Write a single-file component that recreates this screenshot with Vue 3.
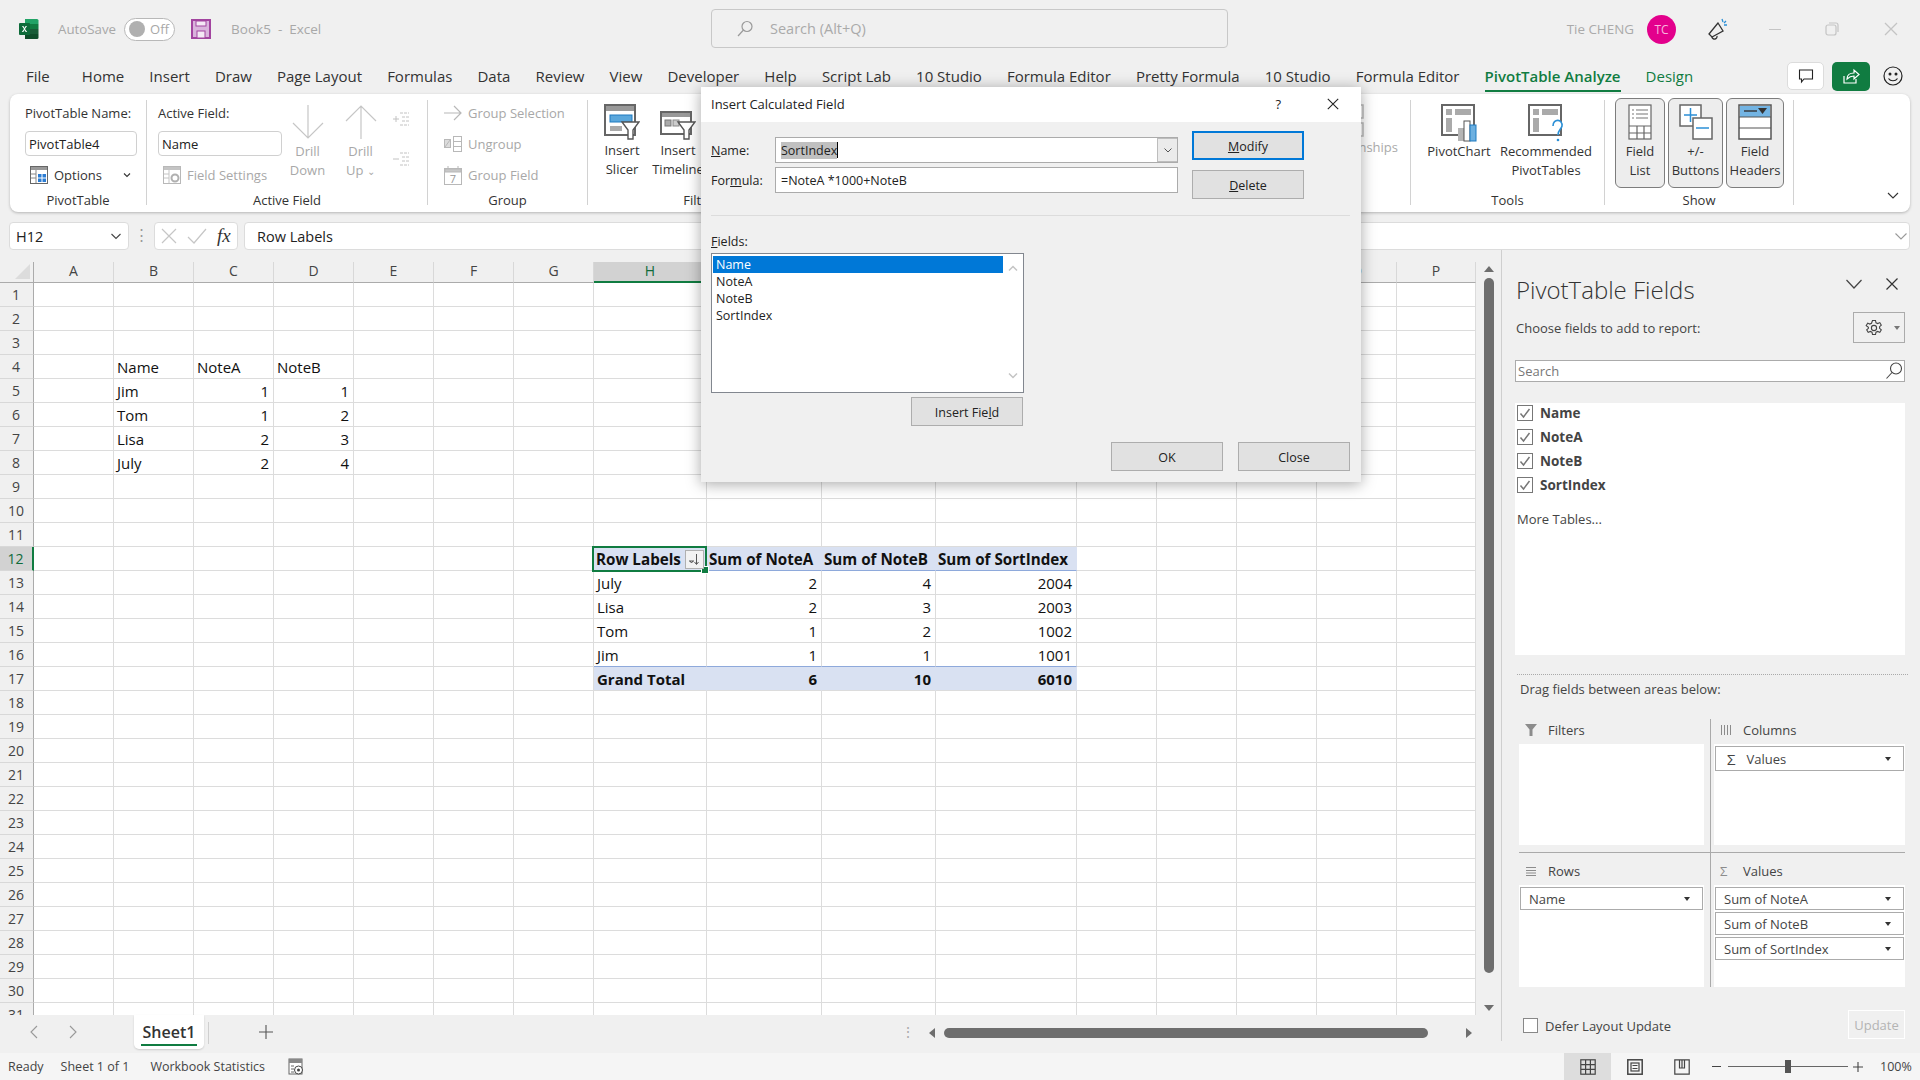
<template>
  <div class="app">
    <!-- title bar -->
    <div class="titlebar">
      <svg class="xl-logo" width="20" height="20" viewBox="0 0 20 20">
        <path d="M6 0h12a1.5 1.5 0 0 1 1.5 1.5V5H6z" fill="#21a366" />
        <rect x="6" y="5" width="13.5" height="5" fill="#107c41" />
        <rect x="6" y="10" width="13.5" height="5" fill="#185c37" />
        <path d="M6 15h13.5v3.5A1.5 1.5 0 0 1 18 20H6z" fill="#0f4c2a" />
        <rect x="0" y="4" width="11" height="12" rx="1" fill="#0e6b3a" />
        <path d="M3 7l2 3-2.2 3h1.5l1.2-2 1.2 2h1.5L6 10l2-3H6.600L5.500 9 4.400 7z" fill="#fff" />
      </svg>
      <span class="autosave">AutoSave</span>
      <div class="toggle"><span class="knob"></span><span>Off</span></div>
      <svg class="save" width="20" height="20" viewBox="0 0 20 20">
        <rect x="1" y="1" width="18" height="18" fill="#d9b3dc" stroke="#a2449f" stroke-width="2" />
        <rect x="5" y="2" width="10" height="5" fill="#f4e8f5" stroke="#a2449f" />
        <rect x="6" y="12" width="8" height="7" fill="#f4e8f5" stroke="#a2449f" />
      </svg>
      <span class="doc-name">Book5&nbsp; -&nbsp; Excel</span>
      <div class="search-box">
        <svg width="18" height="18" viewBox="0 0 18 18" fill="none" stroke="#9a9a9a" stroke-width="1.2">
          <circle cx="11" cy="6.500" r="5" />
          <path d="M7.500 10L2 16" />
        </svg>
        <span>Search (Alt+Q)</span>
      </div>
      <div class="title-right">
        <span class="user">Tie CHENG</span>
        <span class="avatar">TC</span>
        <svg class="mega" width="22" height="24" viewBox="0 0 22 24" fill="none" stroke="#333" stroke-width="1.300">
          <path d="M11 6L2 17l3 3 11-6z" />
          <path d="M5 20a2.500 2.500 0 0 0 5-1" />
          <path d="M15 2l1 3M19 4l-2 2M20 8l-3 0" stroke="#2b8fd6" />
        </svg>
        <span class="win-btn min"></span>
        <svg class="win-btn-svg" width="14" height="14" viewBox="0 0 14 14" fill="none" stroke="#c4c4c4" stroke-width="1.200">
          <rect x="1" y="3" width="10" height="10" rx="2" />
          <path d="M4 1h7a2 2 0 0 1 2 2v7" />
        </svg>
        <svg class="win-close" width="14" height="14" viewBox="0 0 14 14" stroke="#c4c4c4" stroke-width="1.300">
          <path d="M1 1l12 12M13 1L1 13" />
        </svg>
      </div>
    </div>

    <!-- tabs -->
    <div class="tabs">
      <span v-for="t in tabs" :key="t.key" class="tab" :class="t.cls">{{ t.label }}</span>
      <div class="tab-actions">
        <span class="comment-btn">
          <svg width="16" height="16" viewBox="0 0 16 16" fill="none" stroke="#222" stroke-width="1.100">
            <path d="M1.500 2h13v9H6l-2.500 3v-3H1.500z" />
          </svg>
        </span>
        <span class="share-btn">
          <svg width="18" height="18" viewBox="0 0 18 18" fill="none" stroke="#fff" stroke-width="1.200">
            <path d="M2 9v7h12v-4" />
            <path d="M5 12c0-4 3-6 7-6V3l5 4.500L12 12V9c-3 0-5 1-7 3z" />
          </svg>
        </span>
        <svg class="smile" width="20" height="20" viewBox="0 0 20 20" fill="none" stroke="#222" stroke-width="1.200">
          <circle cx="10" cy="10" r="9" />
          <circle cx="7" cy="8" r=".9" fill="#222" />
          <circle cx="13" cy="8" r=".9" fill="#222" />
          <path d="M5.500 12.500c2 3 7 3 9 0" />
        </svg>
      </div>
    </div>

    <!-- ribbon -->
    <div class="ribbon">
      <div class="group g-pivot">
        <div class="small-col">
          <div class="s-row">PivotTable Name:</div>
          <div class="s-row"><div class="r-input w112">PivotTable4</div></div>
          <div class="s-row opt">
            <svg width="18" height="18" viewBox="0 0 18 18">
              <rect x=".5" y=".5" width="17" height="17" fill="#fff" stroke="#666" />
              <rect x="1" y="1" width="16" height="3" fill="#999" />
              <path d="M6 4v13M1 8h5M1 12h5" stroke="#888" />
              <rect x="8" y="8" width="8" height="8" fill="#2b7cd3" />
              <path d="M12 8v8M8 12h8" stroke="#fff" />
            </svg>
            <span>Options</span>
            <svg class="chev" width="10" height="10" viewBox="0 0 10 10" fill="none" stroke="#333" stroke-width="1.100">
              <path d="M2 3.500L5 6.500 8 3.500" />
            </svg>
          </div>
        </div>
        <div class="g-label">PivotTable</div>
      </div>

      <div class="group g-active">
        <div class="g-body">
          <div class="small-col">
            <div class="s-row">Active Field:</div>
            <div class="s-row"><div class="r-input w124">Name</div></div>
            <div class="s-row opt dim">
              <svg width="18" height="18" viewBox="0 0 18 18">
                <rect x=".5" y=".5" width="17" height="17" fill="#fff" stroke="#b8b8b8" />
                <rect x="1" y="1" width="16" height="3" fill="#c4c4c4" />
                <path d="M6 4v13M1 8h5M1 12h5" stroke="#c4c4c4" />
                <circle cx="12" cy="12" r="3.500" fill="none" stroke="#b0b0b0" stroke-width="2" />
              </svg>
              <span>Field Settings</span>
            </div>
          </div>
          <div class="drill down">
            <svg width="32" height="36" viewBox="0 0 32 36" fill="none" stroke="#c6c6c6" stroke-width="1.200">
              <path d="M16 1v33M1 19l15 15 15-15" />
            </svg>
            <span>Drill</span><span>Down</span>
          </div>
          <div class="drill up">
            <svg width="32" height="36" viewBox="0 0 32 36" fill="none" stroke="#c6c6c6" stroke-width="1.200">
              <path d="M16 35V2M1 17L16 2l15 15" />
            </svg>
            <span>Drill</span><span>Up <small>⌄</small></span>
          </div>
          <div class="expand">
            <svg width="18" height="18" viewBox="0 0 18 18" stroke="#c2c2c2">
              <path d="M1 8h6M4 5v6" />
              <path d="M8 2h9M10 6h7M10 10h7M8 14h9" stroke-dasharray="3 1" />
            </svg>
            <svg width="18" height="18" viewBox="0 0 18 18" stroke="#c2c2c2">
              <path d="M1 8h6" />
              <path d="M8 2h9M10 6h7M10 10h7M8 14h9" stroke-dasharray="3 1" />
            </svg>
          </div>
        </div>
        <div class="g-label">Active Field</div>
      </div>

      <div class="group g-group">
        <div class="small-col">
          <div class="s-row opt dim">
            <svg width="18" height="18" viewBox="0 0 18 18" fill="none" stroke="#b8b8b8" stroke-width="1.200">
              <path d="M0 9h17M10 2l7 7-7 7" />
            </svg>
            <span>Group Selection</span>
          </div>
          <div class="s-row opt dim tight">
            <svg width="18" height="18" viewBox="0 0 18 18" fill="none" stroke="#b8b8b8">
              <rect x=".5" y="4.500" width="6" height="8" fill="#dcdcdc" />
              <rect x="9.500" y="1.500" width="8" height="15" />
              <path d="M9.500 6.500h8M9.500 11.500h8M1 12l5-7" />
            </svg>
            <span>Ungroup</span>
          </div>
          <div class="s-row opt dim">
            <svg width="18" height="19" viewBox="0 0 18 19" fill="none" stroke="#b8b8b8">
              <rect x=".5" y="2.500" width="17" height="16" />
              <rect x="1" y="3" width="16" height="3" fill="#c8c8c8" />
              <path d="M4 0v3M14 0v3" />
              <text x="9" y="16.500" text-anchor="middle" font-size="11" fill="#999" stroke="none" font-family="'Open Sans', sans-serif">7</text>
            </svg>
            <span>Group Field</span>
          </div>
        </div>
        <div class="g-label">Group</div>
      </div>

      <div class="group g-filter">
        <div class="g-body">
          <div class="big">
            <svg width="36" height="36" viewBox="0 0 36 36">
              <rect x="1" y="1" width="30" height="30" fill="#fff" stroke="#666" stroke-width="2" />
              <rect x="2" y="2" width="28" height="5" fill="#999" />
              <rect x="6" y="11" width="22" height="7" fill="#5aa7dc" stroke="#1f7ac0" />
              <rect x="6" y="22" width="12" height="5" fill="#aaa" />
              <path d="M18 18h17l-6 8v9h-5v-9z" fill="#fff" stroke="#555" stroke-width="1.400" />
            </svg>
            <span>Insert</span><span>Slicer</span>
          </div>
          <div class="big">
            <svg width="36" height="36" viewBox="0 0 36 36">
              <rect x="1" y="8" width="30" height="22" fill="#fff" stroke="#666" stroke-width="2" />
              <rect x="2" y="9" width="28" height="4" fill="#999" />
              <rect x="5" y="16" width="6" height="6" fill="#aaa" stroke="#777" />
              <rect x="13" y="16" width="6" height="6" fill="#ccc" stroke="#888" />
              <path d="M18 18h17l-6 8v9h-5v-9z" fill="#fff" stroke="#555" stroke-width="1.400" />
            </svg>
            <span>Insert</span><span>Timeline</span>
          </div>
        </div>
        <div class="g-label">Filter</div>
      </div>

      <div class="group g-hidden">
        <div class="rel">
          <svg width="14" height="34" viewBox="0 0 14 34" fill="#fff" stroke="#bdbdbd" stroke-width="1.500">
            <rect x="1" y="1" width="12" height="13" />
            <path d="M4 6h6M4 9h6" />
            <rect x="1" y="19" width="12" height="13" />
            <path d="M4 24h6M4 27h6" />
          </svg>
          <span>Relationships</span>
        </div>
      </div>

      <div class="group g-tools">
        <div class="g-body">
          <div class="big">
            <svg width="36" height="38" viewBox="0 0 36 38">
              <path d="M1 1h32v30H1z" fill="#fff" stroke="#666" stroke-width="2" />
              <rect x="5" y="5" width="6" height="6" fill="#aaa" />
              <rect x="14" y="5" width="16" height="6" fill="#aaa" />
              <rect x="5" y="14" width="6" height="14" fill="#aaa" />
              <rect x="17" y="24" width="6" height="13" fill="#b5b5b5" />
              <rect x="23" y="17" width="6" height="20" fill="#fff" stroke="#555" />
              <rect x="29" y="21" width="6" height="16" fill="#6db0e0" stroke="#1f7ac0" />
            </svg>
            <span>PivotChart</span>
          </div>
          <div class="big rec">
            <svg width="36" height="38" viewBox="0 0 36 38">
              <path d="M1 1h32v30H1z" fill="#fff" stroke="#666" stroke-width="2" />
              <rect x="5" y="5" width="6" height="6" fill="#aaa" />
              <rect x="14" y="5" width="16" height="6" fill="#aaa" />
              <rect x="5" y="14" width="6" height="14" fill="#aaa" />
              <path d="M25 22c0-8 10-7 9 0-.6 3-4 4-4 9" fill="#fff" stroke="#2b8fd6" stroke-width="1.600" />
              <circle cx="30" cy="36" r="1.300" fill="#2b8fd6" />
            </svg>
            <span>Recommended</span><span>PivotTables</span>
          </div>
        </div>
        <div class="g-label">Tools</div>
      </div>

      <div class="group g-show">
        <div class="g-body">
          <div class="toggle-big w50">
            <svg width="24" height="36" viewBox="0 0 24 36" fill="#fff" stroke="#666" stroke-width="1.200">
              <rect x="1" y="1" width="22" height="34" />
              <path d="M1 22h22M1 29h22M9 22v13M16 22v13" />
              <path d="M4 6h2M8 6h12M4 10h2M8 10h12M4 14h2M8 14h12" stroke="#777" />
            </svg>
            <span>Field</span><span>List</span>
          </div>
          <div class="toggle-big w54">
            <svg width="34" height="36" viewBox="0 0 34 36">
              <rect x="1" y="1" width="21" height="21" fill="#fff" stroke="#666" stroke-width="1.500" />
              <path d="M5 11h13M11.500 4v14" stroke="#2b8fd6" stroke-width="1.500" />
              <rect x="14" y="14" width="19" height="21" fill="#fff" stroke="#666" stroke-width="1.500" />
              <path d="M17 24h13" stroke="#2b8fd6" stroke-width="1.500" />
            </svg>
            <span>+/-</span><span>Buttons</span>
          </div>
          <div class="toggle-big w58">
            <svg width="34" height="36" viewBox="0 0 34 36">
              <rect x="1" y="1" width="32" height="34" fill="#fff" stroke="#555" stroke-width="1.500" />
              <rect x="2" y="2" width="30" height="11" fill="#73b4e3" />
              <path d="M1 13h32M1 24h32" stroke="#555" stroke-width="1.200" />
              <path d="M6 7h13" stroke="#333" stroke-width="1.400" />
              <path d="M20 4h9l-4.500 6z" fill="#333" />
            </svg>
            <span>Field</span><span>Headers</span>
          </div>
        </div>
        <div class="g-label">Show</div>
      </div>

      <svg class="collapse" width="14" height="14" viewBox="0 0 14 14" fill="none" stroke="#333" stroke-width="1.100">
        <path d="M2 4l5 5 5-5" />
      </svg>
    </div>

    <!-- formula bar -->
    <div class="formula-bar">
      <div class="name-box">
        <span>H12</span>
        <svg width="12" height="12" viewBox="0 0 12 12" fill="none" stroke="#444" stroke-width="1.100">
          <path d="M1.500 4l4.500 4.500L10.500 4" />
        </svg>
      </div>
      <div class="fb-dots">⋮</div>
      <div class="fx-box">
        <svg width="16" height="16" viewBox="0 0 16 16" stroke="#c6c6c6" stroke-width="1.200">
          <path d="M1 1l14 14M15 1L1 15" />
        </svg>
        <svg width="20" height="16" viewBox="0 0 20 16" fill="none" stroke="#c6c6c6" stroke-width="1.200">
          <path d="M1 9l6 6L19 1" />
        </svg>
        <span class="fx">fx</span>
      </div>
      <div class="formula-input">
        <span>Row Labels</span>
        <svg width="14" height="14" viewBox="0 0 14 14" fill="none" stroke="#999" stroke-width="1.100">
          <path d="M1.500 4.500L7 10l5.500-5.500" />
        </svg>
      </div>
    </div>

    <!-- work area -->
    <div class="work">
      <div class="sheet-col">
        <div class="sheet-top">
          <div class="grid">
            <div class="corner"><span class="tri"></span></div>
            <div v-for="c in columns" :key="c.n" class="col-head" :class="{ sel: c.n === 'H' }">{{ c.n }}</div>
            <template v-for="r in rows" :key="r">
              <div class="row-head" :class="{ sel: r === 12 }">{{ r }}</div>
              <div v-for="c in columns" :key="c.n + r" class="cell" :class="cellClass(c.n, r)">
                {{ cellText(c.n, r) }}
              </div>
            </template>
            <div class="sel-box">
              <span class="sel-handle"></span>
              <span class="pv-btn">
                <svg width="15" height="15" viewBox="0 0 15 15" fill="none" stroke="#555">
                  <path d="M9.500 2v10M7.500 10l2 2.500 2-2.500" />
                  <path d="M2 9h5M3 9l1.500 2L6 9" />
                </svg>
              </span>
            </div>
          </div>
          <div class="vscroll">
            <span class="arr-up"></span>
            <span class="v-thumb"></span>
            <span class="arr-down"></span>
          </div>
        </div>
        <div class="sheet-tabs">
          <svg class="nav first" width="12" height="16" viewBox="0 0 12 16" fill="none" stroke="#999" stroke-width="1.100">
            <path d="M9 2L3 8l6 6" />
          </svg>
          <svg class="nav second" width="12" height="16" viewBox="0 0 12 16" fill="none" stroke="#999" stroke-width="1.100">
            <path d="M3 2l6 6-6 6" />
          </svg>
          <div class="sheet-tab"><span>Sheet1</span></div>
          <span class="tab-sep"></span>
          <span class="add-sheet">
            <svg width="16" height="16" viewBox="0 0 16 16" stroke="#555" stroke-width="1.100">
              <path d="M8 1v14M1 8h14" />
            </svg>
          </span>
          <span class="hs-dots">⋮</span>
          <div class="hscroll">
            <span class="arr-left"></span>
            <span class="h-thumb"></span>
            <span class="arr-right"></span>
          </div>
        </div>
      </div>

      <!-- pivot fields pane -->
      <div class="pane">
        <div class="pane-head">
          <span class="pane-title">PivotTable Fields</span>
          <div class="pane-ctrl">
            <svg width="18" height="12" viewBox="0 0 18 12" fill="none" stroke="#444" stroke-width="1.200">
              <path d="M1.500 2L9 10l7.500-8" />
            </svg>
            <svg width="14" height="14" viewBox="0 0 14 14" stroke="#333" stroke-width="1.200">
              <path d="M1.500 1.500l11 11M12.500 1.500l-11 11" />
            </svg>
          </div>
        </div>
        <div class="choose-row">
          <span>Choose fields to add to report:</span>
          <div class="gear-box">
            <svg width="18" height="18" viewBox="0 0 18 18" fill="none" stroke="#444" stroke-width="1.100">
              <path d="M7.500 1.500h3l.5 2.300 1.700.8 2.100-1 1.500 2.600-1.700 1.500v1.600l1.700 1.500-1.500 2.600-2.100-1-1.700.8-.5 2.300h-3l-.5-2.300-1.700-.8-2.100 1-1.500-2.600 1.700-1.500V8.200L1.200 6.700l1.500-2.600 2.100 1 1.700-.8z" />
              <circle cx="9" cy="9" r="2.600" />
            </svg>
            <span class="caret-sm"></span>
          </div>
        </div>
        <div class="pane-search">
          <span>Search</span>
          <svg width="18" height="18" viewBox="0 0 18 18" fill="none" stroke="#444" stroke-width="1.100">
            <circle cx="11" cy="6.500" r="5.500" />
            <path d="M7 10.500L1.500 16.500" />
          </svg>
        </div>
        <div class="field-list">
          <div v-for="f in fields" :key="f" class="field-row">
            <span class="check">
              <svg width="12" height="12" viewBox="0 0 12 12" fill="none" stroke="#777" stroke-width="1.500">
                <path d="M1.500 6.500l3 3.500 6-8" />
              </svg>
            </span>
            <b>{{ f }}</b>
          </div>
          <div class="more">More Tables...</div>
        </div>
        <div class="dotted"></div>
        <div class="drag-label">Drag fields between areas below:</div>
        <div class="areas">
          <div class="area left top-row">
            <div class="area-head">
              <svg width="12" height="12" viewBox="0 0 12 12" fill="#8c8c8c">
                <path d="M0 0h12L7.500 5.500V12h-3V5.500z" />
              </svg>
              <span>Filters</span>
            </div>
            <div class="area-box"></div>
          </div>
          <div class="area top-row">
            <div class="area-head">
              <svg width="12" height="12" viewBox="0 0 12 12" stroke="#8c8c8c">
                <path d="M1.500 1v10M4.500 1v10M7.500 1v10M10.500 1v10" />
              </svg>
              <span>Columns</span>
            </div>
            <div class="area-box">
              <div class="pill sigma"><i>Σ</i><span>Values</span><span class="caret-pill"></span></div>
            </div>
          </div>
          <div class="area left">
            <div class="area-head">
              <svg width="12" height="12" viewBox="0 0 12 12" stroke="#8c8c8c">
                <path d="M1 2.500h10M1 5.500h10M1 8h10M1 10.500h10" />
              </svg>
              <span>Rows</span>
            </div>
            <div class="area-box">
              <div class="pill"><span>Name</span><span class="caret-pill"></span></div>
            </div>
          </div>
          <div class="area">
            <div class="area-head">
              <span class="sig-ico">Σ</span>
              <span>Values</span>
            </div>
            <div class="area-box">
              <div v-for="v in valueFields" :key="v" class="pill"><span>{{ v }}</span><span class="caret-pill"></span></div>
            </div>
          </div>
        </div>
        <div class="pane-foot">
          <label class="defer"><span class="box"></span><span>Defer Layout Update</span></label>
          <span class="update">Update</span>
        </div>
      </div>
    </div>

    <!-- status bar -->
    <div class="statusbar">
      <span class="st first">Ready</span>
      <span class="st">Sheet 1 of 1</span>
      <span class="st wb">Workbook Statistics</span>
      <svg class="st-ico" width="16" height="18" viewBox="0 0 16 18">
        <rect x="1" y="1" width="13" height="15" fill="#fff" stroke="#666" />
        <rect x="1" y="1" width="13" height="4" fill="#888" />
        <path d="M3 8h3M3 11h3M3 14h3" stroke="#666" />
        <circle cx="10.500" cy="12" r="4" fill="#fff" stroke="#444" />
        <circle cx="10.500" cy="12" r="1.500" fill="#444" />
      </svg>
      <div class="st-right">
        <span class="view active">
          <svg width="16" height="16" viewBox="0 0 16 16" fill="none" stroke="#444" stroke-width="1.200">
            <rect x=".8" y=".8" width="14.400" height="14.400" />
            <path d="M5.600 1v14M10.400 1v14M1 5.600h14M1 10.400h14" />
          </svg>
        </span>
        <span class="view">
          <svg width="16" height="16" viewBox="0 0 16 16" fill="none" stroke="#444" stroke-width="1.200">
            <rect x=".8" y=".8" width="14.400" height="14.400" stroke-width="1.500" />
            <rect x="4" y="4" width="8" height="8" />
            <path d="M5.500 6.500h5M5.500 9.500h5" />
          </svg>
        </span>
        <span class="view">
          <svg width="16" height="16" viewBox="0 0 16 16" fill="none" stroke="#444" stroke-width="1.200">
            <path d="M.8.800h14.400v14.400H.8zM5.500 1v8h5V1M8 1v8" />
          </svg>
        </span>
        <span class="zoom-minus"></span>
        <div class="slider"><span class="slider-thumb"></span></div>
        <svg class="zoom-plus" width="10" height="10" viewBox="0 0 10 10" stroke="#444" stroke-width="1.100">
          <path d="M5 0v10M0 5h10" />
        </svg>
        <span class="zoom-val">100%</span>
      </div>
    </div>

    <!-- dialog -->
    <div class="dialog">
      <div class="dlg-title">
        <span>Insert Calculated Field</span>
        <span class="dlg-help">?</span>
        <svg width="12" height="12" viewBox="0 0 12 12" stroke="#222" stroke-width="1.100">
          <path d="M.8.800l10.400 10.400M11.200.800L.8 11.200" />
        </svg>
      </div>
      <div class="dlg-body">
        <div class="dlg-top">
          <div class="dlg-fields">
            <div class="dlg-row">
              <span class="dlg-lab"><u>N</u>ame:</span>
              <div class="dlg-combo">
                <span class="dlg-text"><span class="dlg-sel">SortIndex</span><span class="dlg-caret"></span></span>
                <span class="combo-arrow">
                  <svg width="10" height="10" viewBox="0 0 10 10" fill="none" stroke="#555">
                    <path d="M1.500 3.500L5 7l3.500-3.500" />
                  </svg>
                </span>
              </div>
            </div>
            <div class="dlg-row">
              <span class="dlg-lab">For<u>m</u>ula:</span>
              <div class="dlg-input">=NoteA *1000+NoteB</div>
            </div>
          </div>
          <div class="dlg-btns">
            <span class="btn primary"><u>M</u>odify</span>
            <span class="btn"><u>D</u>elete</span>
          </div>
        </div>
        <div class="dlg-hr"></div>
        <div class="fields-lab"><u>F</u>ields:</div>
        <div class="listbox">
          <div class="list-items">
            <div v-for="(f, i) in fields" :key="f" class="list-item" :class="{ on: i === 0 }">{{ f }}</div>
          </div>
          <div class="list-scroll">
            <svg width="10" height="8" viewBox="0 0 10 8" fill="none" stroke="#c4c4c4" stroke-width="1.500">
              <path d="M1 6.500l4-4 4 4" />
            </svg>
            <svg width="10" height="8" viewBox="0 0 10 8" fill="none" stroke="#c4c4c4" stroke-width="1.500">
              <path d="M1 1.500l4 4 4-4" />
            </svg>
          </div>
        </div>
        <div class="insert-row"><span class="btn">Insert Fie<u>l</u>d</span></div>
        <div class="dlg-foot">
          <span class="btn">OK</span>
          <span class="btn">Close</span>
        </div>
      </div>
    </div>
  </div>
</template>

<script setup>
const tabs = [
  'File', 'Home', 'Insert', 'Draw', 'Page Layout', 'Formulas', 'Data', 'Review', 'View',
  'Developer', 'Help', 'Script Lab', '10 Studio', 'Formula Editor', 'Pretty Formula',
  '10 Studio', 'Formula Editor',
].map((label, i) => ({ label, key: i, cls: '' }))
tabs.push({ label: 'PivotTable Analyze', key: 'pa', cls: 'active' })
tabs.push({ label: 'Design', key: 'de', cls: 'ctx' })

const widths = [80, 80, 80, 80, 80, 80, 80, 113, 115, 114, 141, 80, 80, 80, 80, 79]
const columns = widths.map((w, i) => ({ n: String.fromCharCode(65 + i), w }))
const rows = Array.from({ length: 31 }, (_, i) => i + 1)

const fields = ['Name', 'NoteA', 'NoteB', 'SortIndex']
const valueFields = ['Sum of NoteA', 'Sum of NoteB', 'Sum of SortIndex']

const data = {
  B4: 'Name', C4: 'NoteA', D4: 'NoteB',
  B5: 'Jim', C5: 1, D5: 1,
  B6: 'Tom', C6: 1, D6: 2,
  B7: 'Lisa', C7: 2, D7: 3,
  B8: 'July', C8: 2, D8: 4,
  H12: 'Row Labels', I12: 'Sum of NoteA', J12: 'Sum of NoteB', K12: 'Sum of SortIndex',
  H13: 'July', I13: 2, J13: 4, K13: 2004,
  H14: 'Lisa', I14: 2, J14: 3, K14: 2003,
  H15: 'Tom', I15: 1, J15: 2, K15: 1002,
  H16: 'Jim', I16: 1, J16: 1, K16: 1001,
  H17: 'Grand Total', I17: 6, J17: 10, K17: 6010,
}

const cellText = (c, r) => data[c + r] ?? ''

const cellClass = (c, r) => {
  const inPivot = 'HIJK'.includes(c)
  return {
    num: typeof data[c + r] === 'number',
    'pv-head': inPivot && r === 12,
    'pv-total': inPivot && r === 17,
    'pv-last': inPivot && r === 16,
  }
}
</script>

<style>
html, body { margin: 0; padding: 0; background: #f0f0f0; }
</style>

<style scoped>
.app {
  width: 1920px;
  height: 1080px;
  display: flex;
  flex-direction: column;
  position: relative;
  overflow: hidden;
  background: #f0f0f0;
  font-family: "Open Sans", "Noto Sans", sans-serif;
  font-size: 13px;
  color: #333;
}

/* title bar */
.titlebar {
  height: 58px;
  display: flex;
  align-items: center;
  padding-left: 19px;
  flex-shrink: 0;
  color: #a8a8a8;
}
.autosave { margin-left: 19px; font-size: 13.300px; }
.toggle {
  width: 51px;
  height: 23px;
  margin-left: 8px;
  box-sizing: border-box;
  border: 1px solid #b8b8b8;
  border-radius: 12px;
  background: #fff;
  display: flex;
  align-items: center;
  padding-left: 4px;
  gap: 5px;
  font-size: 13px;
}
.knob { width: 16px; height: 16px; border-radius: 50%; background: #b0b0b0; }
.save { margin-left: 16px; }
.doc-name { margin-left: 20px; font-size: 13.500px; }
.search-box {
  position: absolute;
  left: 711px;
  top: 9px;
  width: 517px;
  height: 39px;
  box-sizing: border-box;
  border: 1px solid #c8c8c8;
  border-radius: 4px;
  display: flex;
  align-items: center;
  padding-left: 24px;
  gap: 16px;
  font-size: 14.500px;
  color: #aaa;
}
.title-right {
  margin-left: auto;
  display: flex;
  align-items: center;
  padding-right: 22px;
}
.user { font-size: 13.400px; color: #aaa; }
.avatar {
  width: 29px;
  height: 29px;
  margin-left: 13px;
  border-radius: 50%;
  background: #e3008c;
  color: #f6b6dc;
  font-size: 12px;
  display: flex;
  align-items: center;
  justify-content: center;
}
.mega { margin-left: 31px; }
.win-btn.min { width: 12px; height: 1px; margin-left: 40px; background: #c4c4c4; }
.win-btn-svg { margin-left: 44px; }
.win-close { margin-left: 45px; }

/* tabs */
.tabs {
  height: 36px;
  flex-shrink: 0;
  display: flex;
  align-items: center;
  gap: 25.100px;
  padding-left: 26px;
  font-size: 15px;
  color: #333;
  position: relative;
}
.tab { line-height: 30px; white-space: nowrap; }
.tab:first-child { margin-right: 7px; }
.tab.active {
  color: #107c41;
  font-weight: 600;
  box-shadow: 0 2px 0 0 #107c41;
  height: 28px;
  line-height: 28px;
}
.tab.ctx { color: #107c41; }
.tab-actions {
  margin-left: auto;
  display: flex;
  align-items: center;
  padding-right: 17px;
  gap: 8px;
}
.comment-btn {
  width: 37px;
  height: 28px;
  border: 1px solid #dcdcdc;
  border-radius: 5px;
  background: #fff;
  box-sizing: border-box;
  display: flex;
  align-items: center;
  justify-content: center;
}
.share-btn {
  width: 38px;
  height: 29px;
  border-radius: 5px;
  background: #107c41;
  display: flex;
  align-items: center;
  justify-content: center;
}
.smile { margin-left: 5px; }

/* ribbon */
.ribbon {
  height: 118px;
  margin: 0 10px;
  flex-shrink: 0;
  background: #fff;
  border-radius: 8px;
  box-shadow: 0 1px 3px rgba(0, 0, 0, .25);
  display: flex;
  padding-top: 6px;
  box-sizing: border-box;
  position: relative;
}
.group {
  height: 105px;
  border-right: 1px solid #d2d2d2;
  box-sizing: border-box;
  display: flex;
  flex-direction: column;
  flex-shrink: 0;
}
.g-label {
  margin-top: auto;
  margin-bottom: -5px;
  line-height: 20px;
  text-align: center;
  font-size: 13px;
  color: #333;
}
.g-body { display: flex; }
.g-pivot { width: 137px; padding-left: 15px; }
.g-pivot .g-label { margin-left: -15px; }
.g-active { width: 281px; padding-left: 11px; }
.g-active .g-label { margin-left: -11px; }
.g-group { width: 160px; padding-left: 16px; }
.g-group .g-label { margin-left: -16px; }
.g-filter { width: 222px; padding-left: 6px; }
.g-filter .g-label { margin-left: -6px; }
.g-hidden { width: 601px; align-items: flex-end; padding-right: 12px; }
.g-tools { width: 194px; }
.g-show { width: 189px; padding-left: 10px; }
.g-show .g-label { margin-left: -10px; }
.small-col {
  display: grid;
  grid-template-rows: 26px 35px 28px;
  height: 89px;
  white-space: nowrap;
}
.s-row { display: flex; align-items: center; }
.s-row.opt { gap: 6px; padding-left: 5px; }
.g-group .s-row.opt { padding-left: 0; }
.s-row.dim { color: #a8a8a8; }
.chev { margin-left: 14px; }
.r-input {
  height: 25px;
  box-sizing: border-box;
  border: 1px solid #d0d0d0;
  border-radius: 4px;
  display: flex;
  align-items: center;
  padding-left: 3px;
  color: #222;
}
.w112 { width: 112px; }
.w124 { width: 124px; }
.drill {
  width: 53px;
  display: flex;
  flex-direction: column;
  align-items: center;
  color: #a8a8a8;
  padding-top: 4px;
  line-height: 19px;
}
.drill svg { margin-bottom: 2px; }
.drill small { font-size: 10px; }
.drill.down { margin-left: -1px; }
.expand {
  margin-left: 5px;
  padding-top: 11px;
  display: flex;
  flex-direction: column;
  gap: 22px;
}
.big {
  display: flex;
  flex-direction: column;
  align-items: center;
  padding-top: 4px;
  line-height: 19px;
  width: 56px;
  color: #333;
}
.big svg { margin-bottom: 1px; }
.g-tools .big { width: 96px; }
.g-tools .big svg { margin-bottom: 0; }
.g-tools .big.rec { width: 90px; margin-left: -6px; }
.rel {
  display: flex;
  flex-direction: column;
  align-items: center;
  padding-top: 4px;
  color: #aaa;
  line-height: 19px;
}
.toggle-big {
  height: 90px;
  margin-top: -2px;
  margin-right: 3px;
  box-sizing: border-box;
  border: 1px solid #7d7d7d;
  border-radius: 6px;
  background: #ededed;
  display: flex;
  flex-direction: column;
  align-items: center;
  padding-top: 5px;
  line-height: 19px;
}
.toggle-big svg { margin-bottom: 2px; }
.w50 { width: 50px; }
.w54 { width: 55px; }
.w58 { width: 58px; }
.collapse { position: absolute; right: 10px; top: 95px; }

/* formula bar */
.formula-bar {
  height: 28px;
  margin: 10px 10px 0 9px;
  display: flex;
  flex-shrink: 0;
  font-size: 14.500px;
  color: #222;
}
.formula-bar > div { box-sizing: border-box; }
.name-box, .fx-box, .formula-input {
  background: #fff;
  border: 1px solid #dcdcdc;
  border-radius: 4px;
  display: flex;
  align-items: center;
}
.name-box { width: 120px; padding: 0 6px; justify-content: space-between; }
.fb-dots { width: 25px; text-align: center; color: #999; line-height: 26px; }
.fx-box { width: 84px; padding-left: 6px; gap: 10px; }
.fx { font-family: "Liberation Serif", serif; font-style: italic; font-size: 19px; color: #333; }
.formula-input {
  flex: 1;
  margin-left: 6px;
  padding: 0 1px 0 12px;
  justify-content: space-between;
}

/* work area */
.work { flex: 1; display: flex; min-height: 0; }
.sheet-col {
  width: 1501px;
  flex-shrink: 0;
  display: flex;
  flex-direction: column;
  padding-top: 12px;
  box-sizing: border-box;
}
.sheet-top { display: flex; height: 753px; }
.grid {
  width: 1476px;
  height: 753px;
  flex-shrink: 0;
  display: grid;
  grid-template-columns: 34px repeat(7, 80px) 113px 115px 114px 141px repeat(4, 80px) 79px;
  grid-template-rows: 21px repeat(31, 24px);
  overflow: hidden;
  background: #fff;
  position: relative;
  color: #111;
  font-size: 15px;
}
.corner {
  background: #f0f0f0;
  border-right: 1px solid #ababab;
  border-bottom: 1px solid #ababab;
  box-sizing: border-box;
  position: relative;
}
.tri {
  position: absolute;
  right: 3px;
  bottom: 3px;
  border-style: solid;
  border-width: 0 0 15px 15px;
  border-color: transparent transparent #dcdcdc transparent;
}
.col-head {
  background: #f0f0f0;
  border-right: 1px solid #d8d8d8;
  border-bottom: 1px solid #ababab;
  box-sizing: border-box;
  text-align: center;
  line-height: 18px;
  font-size: 14px;
  color: #444;
}
.col-head.sel { background: #d2d2d2; border-bottom: 2px solid #107c41; color: #0f6b3a; }
.row-head {
  background: #f0f0f0;
  border-right: 1px solid #ababab;
  border-bottom: 1px solid #d8d8d8;
  box-sizing: border-box;
  text-align: center;
  padding-right: 1px;
  line-height: 23px;
  font-size: 14px;
  color: #444;
}
.row-head.sel { background: #d2d2d2; border-right: 2px solid #107c41; color: #0f6b3a; }
.cell {
  border-right: 1px solid #dcdcdc;
  border-bottom: 1px solid #dcdcdc;
  box-sizing: border-box;
  padding: 0 4px 0 3px;
  line-height: 24px;
  white-space: nowrap;
  overflow: hidden;
}
.cell.num { text-align: right; }
.cell.pv-head {
  background: #d9e1f2;
  font-weight: 700;
  font-size: 15.200px;
  padding: 0 2px;
  border-right-color: #d9e1f2;
  border-bottom-color: #8ea9db;
}
.cell.pv-total { background: #d9e1f2; font-weight: 700; border-right-color: #d9e1f2; border-bottom-color: #dcdcdc; }
.cell.pv-last { border-bottom-color: #8ea9db; }
.sel-box {
  position: absolute;
  left: 592px;
  top: 284px;
  width: 115px;
  height: 26px;
  box-sizing: border-box;
  border: 2px solid #107c41;
}
.sel-handle {
  position: absolute;
  right: -4px;
  bottom: -4px;
  width: 6px;
  height: 6px;
  background: #107c41;
  border: 1px solid #fff;
}
.pv-btn {
  position: absolute;
  right: 1px;
  top: 2px;
  width: 19px;
  height: 19px;
  box-sizing: border-box;
  background: #f2f2f2;
  border: 1px solid #b0b0b0;
  display: flex;
  align-items: center;
  justify-content: center;
}
.vscroll {
  width: 26px;
  height: 753px;
  display: flex;
  flex-direction: column;
  align-items: center;
  position: relative;
}
.arr-up {
  margin-top: 4px;
  border-style: solid;
  border-width: 0 5.500px 6px 5.500px;
  border-color: transparent transparent #6e6e6e transparent;
}
.v-thumb { width: 10px; height: 695px; margin-top: 6px; background: #6e6e6e; border-radius: 5px; }
.arr-down {
  margin-top: 32px;
  border-style: solid;
  border-width: 6px 5.500px 0 5.500px;
  border-color: #6e6e6e transparent transparent transparent;
}
.sheet-tabs {
  height: 38px;
  display: flex;
  align-items: flex-start;
  position: relative;
  width: 1476px;
}
.nav { margin-top: 9px; }
.nav.first { margin-left: 28px; }
.nav.second { margin-left: 27px; }
.sheet-tab {
  width: 70px;
  height: 34px;
  margin-left: 55px;
  background: #fff;
  border-radius: 0 0 5px 5px;
  box-shadow: 0 1px 2px rgba(0, 0, 0, .15);
  display: flex;
  justify-content: center;
  position: relative;
  font-size: 16px;
  font-weight: 600;
  color: #333;
  line-height: 34px;
}
.sheet-tab span { border-bottom: 2px solid #107c41; height: 29px; padding: 0 2px; margin-top: 0; }
.tab-sep { width: 1px; height: 22px; margin: 7px 0 0 4px; background: #cfcfcf; }
.add-sheet { margin: 9px 0 0 49px; }
.hs-dots { position: absolute; left: 901px; top: 7px; color: #aaa; font-size: 14px; }
.hscroll {
  position: absolute;
  left: 929px;
  right: 0;
  top: 13px;
  height: 10px;
  display: flex;
  align-items: center;
}
.arr-left {
  border-style: solid;
  border-width: 5.500px 6px 5.500px 0;
  border-color: transparent #6e6e6e transparent transparent;
}
.h-thumb { width: 484px; height: 10px; margin-left: 9px; border-radius: 5px; background: #6e6e6e; }
.arr-right {
  margin-left: 38px;
  border-style: solid;
  border-width: 5.500px 0 5.500px 6px;
  border-color: transparent transparent transparent #6e6e6e;
}

/* pane */
.pane {
  flex: 1;
  border-left: 1px solid #cfcfcf;
  padding: 24px 15px 0 13px;
  box-sizing: border-box;
  height: 791px;
}
.pane-head { height: 30px; display: flex; align-items: center; justify-content: space-between; }
.pane-title { font-size: 24px; font-weight: 300; color: #333; padding-left: 1px; }
.pane-ctrl { display: flex; align-items: center; gap: 22px; padding-right: 6px; margin-top: -10px; }
.choose-row {
  margin-top: 8px;
  height: 31px;
  display: flex;
  align-items: center;
  justify-content: space-between;
  color: #444;
  padding-left: 1px;
}
.gear-box {
  width: 52px;
  height: 31px;
  box-sizing: border-box;
  border: 1px solid #ababab;
  display: flex;
  align-items: center;
  padding-left: 11px;
  gap: 11px;
}
.caret-sm {
  border-style: solid;
  border-width: 4px 3.500px 0 3.500px;
  border-color: #777 transparent transparent transparent;
}
.pane-search {
  margin-top: 17px;
  height: 22px;
  box-sizing: border-box;
  border: 1px solid #ababab;
  background: #fff;
  display: flex;
  align-items: center;
  justify-content: space-between;
  padding: 0 1px 0 2px;
  color: #777;
}
.field-list {
  margin-top: 21px;
  height: 252px;
  background: #fff;
  padding: 0 2px;
  box-sizing: border-box;
}
.field-row { height: 24px; display: flex; align-items: center; gap: 7px; color: #444; position: relative; top: -2px; }
.field-row b { font-weight: 700; font-size: 13.500px; }
.check {
  width: 16px;
  height: 16px;
  box-sizing: border-box;
  border: 1px solid #777;
  display: flex;
  align-items: center;
  justify-content: center;
}
.more { margin-top: 11px; line-height: 18px; color: #444; }
.dotted {
  margin: 19px -3px 0 2px;
  border-top: 1px dotted #aaa;
}
.drag-label { margin: 5px 0 0 5px; line-height: 18px; color: #444; }
.areas {
  margin: 21px 0 0 4px;
  display: grid;
  grid-template-columns: 192px 194px;
  grid-template-rows: 134px 134px;
}
.area { display: flex; flex-direction: column; color: #444; }
.area.left { border-right: 1px solid #aaa; }
.area.top-row { border-bottom: 1px solid #aaa; padding-bottom: 7px; box-sizing: border-box; }
.area:not(.left) { padding-left: 3px; }
.area.left .area-box { margin-right: 6px; }
.area-head { height: 25px; display: flex; align-items: center; gap: 11px; padding-left: 6px; padding-bottom: 3px; box-sizing: border-box; }
.area:not(.top-row) .area-head { height: 32px; padding-top: 4px; padding-bottom: 0; }
.sig-ico { color: #8c8c8c; font-size: 13px; width: 12px; }
.area-box { flex: 1; background: #fff; padding: 2px 1px; display: flex; flex-direction: column; gap: 2px; }
.pill {
  height: 23px;
  box-sizing: border-box;
  border: 1px solid #ababab;
  background: #fff;
  display: flex;
  align-items: center;
  padding: 0 12px 0 8px;
  color: #444;
}
.pill.sigma { height: 25px; }
.pill i { font-style: normal; font-size: 15px; margin: 0 11px 0 3px; }
.caret-pill {
  margin-left: auto;
  border-style: solid;
  border-width: 4px 3.500px 0 3.500px;
  border-color: #333 transparent transparent transparent;
}
.pane-foot {
  margin-top: 23px;
  height: 29px;
  display: flex;
  align-items: center;
  justify-content: space-between;
  color: #444;
}
.defer { display: flex; align-items: center; gap: 7px; padding: 2px 0 0 8px; }
.box { width: 15px; height: 15px; box-sizing: border-box; border: 1px solid #888; background: #fff; }
.update {
  width: 57px;
  height: 29px;
  box-sizing: border-box;
  border: 1px solid #fff;
  display: flex;
  align-items: center;
  justify-content: center;
  color: #b4b4b4;
}

/* status bar */
.statusbar {
  height: 27px;
  flex-shrink: 0;
  display: flex;
  align-items: center;
  background: #f5f5f5;
  font-size: 12.500px;
  color: #444;
}
.st { margin-left: 17px; }
.st.first { margin-left: 8px; }
.st.wb { margin-left: 21px; }
.st-ico { margin-left: 23px; }
.st-right { margin-left: auto; display: flex; align-items: center; height: 100%; }
.view {
  width: 47px;
  height: 100%;
  display: flex;
  align-items: center;
  justify-content: center;
}
.view.active { background: #ddd; }
.zoom-minus { width: 9px; height: 1px; margin-left: 6.500px; background: #444; }
.slider { width: 120px; height: 1px; margin-left: 7.500px; background: #666; position: relative; }
.slider-thumb {
  position: absolute;
  left: 57px;
  top: -6px;
  width: 6px;
  height: 13px;
  background: #555;
}
.zoom-plus { margin-left: 5px; }
.zoom-val { margin-left: 17px; width: 40px; font-size: 12.500px; }

/* dialog */
.dialog {
  position: absolute;
  left: 701px;
  top: 87px;
  width: 660px;
  height: 395px;
  background: #f0f0f0;
  box-shadow: 0 2px 14px rgba(0, 0, 0, .35);
  display: flex;
  flex-direction: column;
  color: #222;
  font-size: 12.500px;
}
.dlg-title {
  height: 35px;
  flex-shrink: 0;
  background: #fff;
  display: flex;
  align-items: center;
  padding: 0 22px 2px 10px;
  box-sizing: border-box;
  font-size: 13px;
}
.dlg-help { margin-left: auto; margin-right: 46px; }
.dlg-body { flex: 1; padding: 9px 11px 0 10px; }
.dlg-top { display: flex; }
.dlg-fields { width: 467px; padding-top: 6px; display: flex; flex-direction: column; gap: 4px; }
.dlg-row { display: flex; align-items: center; }
.dlg-lab { width: 64px; flex-shrink: 0; }
.dlg-combo, .dlg-input {
  width: 403px;
  height: 26px;
  box-sizing: border-box;
  border: 1px solid #ababab;
  background: #fff;
  display: flex;
  align-items: center;
  padding-left: 5px;
}
.dlg-combo { padding-right: 0; justify-content: space-between; }
.dlg-text { display: flex; align-items: center; }
.dlg-sel { background: #c0c0c0; }
.dlg-caret { width: 1px; height: 16px; background: #000; }
.combo-arrow {
  width: 20px;
  height: 24px;
  box-sizing: border-box;
  border: 1px solid #bdbdbd;
  border-right: 0;
  background: #ebebeb;
  display: flex;
  align-items: center;
  justify-content: center;
}
.dlg-btns { margin-left: 14px; display: flex; flex-direction: column; gap: 10px; }
.btn {
  width: 112px;
  height: 29px;
  box-sizing: border-box;
  border: 1px solid #adadad;
  background: #e1e1e1;
  display: flex;
  align-items: center;
  justify-content: center;
  white-space: pre;
  color: #222;
  padding-top: 1px;
}
.btn.primary { border: 2px solid #0078d7; }
.dlg-hr { margin-top: 16px; height: 1px; background: #dcdcdc; }
.fields-lab { margin-top: 17px; line-height: 18px; }
.listbox {
  margin-top: 2px;
  width: 313px;
  height: 140px;
  box-sizing: border-box;
  border: 1px solid #82878f;
  background: #fff;
  display: flex;
  padding: 1px;
}
.list-items { flex: 1; }
.list-item { height: 17px; line-height: 17px; padding-left: 3px; position: relative; top: 1px; }
.list-item.on { background: #0078d7; color: #fff; }
.list-scroll {
  width: 19px;
  display: flex;
  flex-direction: column;
  justify-content: space-between;
  align-items: center;
  padding: 9px 0 11px;
  box-sizing: border-box;
}
.insert-row { width: 313px; margin-top: 4px; display: flex; justify-content: flex-end; padding-right: 1px; box-sizing: border-box; }
.dlg-foot { margin-top: 16px; display: flex; justify-content: flex-end; gap: 15px; }
</style>
